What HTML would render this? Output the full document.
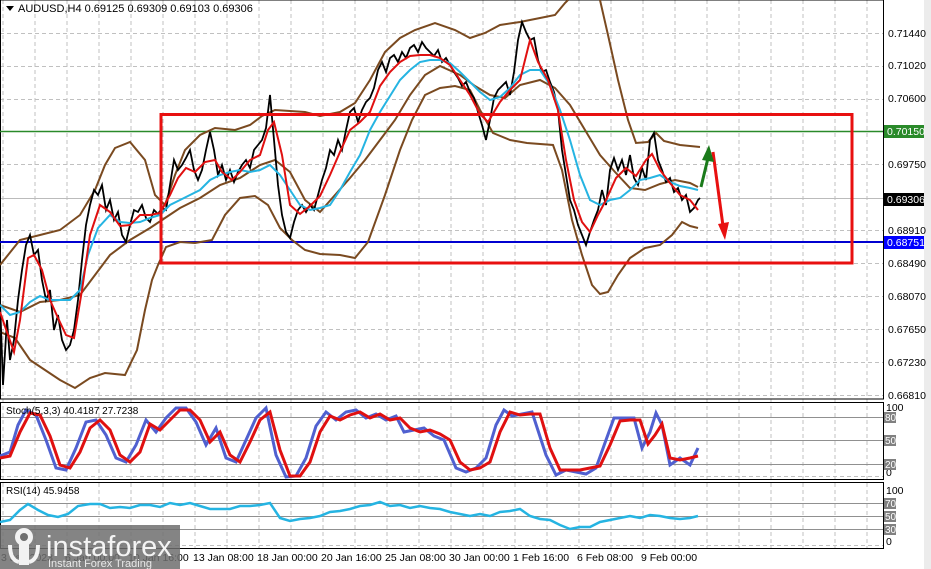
<!DOCTYPE html>
<html><head><meta charset="utf-8"><style>
html,body{margin:0;padding:0;background:#fff;}
body{width:931px;height:569px;overflow:hidden;position:relative;font-family:"Liberation Sans",sans-serif;}
svg text{font-family:"Liberation Sans",sans-serif;}
</style></head><body>
<svg width="931" height="569" viewBox="0 0 931 569" xmlns="http://www.w3.org/2000/svg" style="position:absolute;left:0;top:0">
<rect x="0" y="0" width="931" height="569" fill="#fff"/>
<rect x="924" y="0" width="7" height="569" fill="#ececec"/>
<g stroke="#c0c0c0" stroke-dasharray="4,3" stroke-width="1">
<path d="M3 0V548M35 0V548M67 0V548M99 0V548M131 0V548M163 0V548M195 0V548M227 0V548M259 0V548M291 0V548M323 0V548M355 0V548M387 0V548M419 0V548M451 0V548M483 0V548M515 0V548M547 0V548M579 0V548M611 0V548M643 0V548M675 0V548M707 0V548M739 0V548M771 0V548M803 0V548M835 0V548M867 0V548"/>
<path d="M0 33.5H883M0 66.5H883M0 99.5H883M0 164.5H883M0 230.5H883M0 263.5H883M0 296.5H883M0 329.5H883M0 362.5H883M0 395.5H883M0 476.5H883M0 545.5H883"/>
</g>
<path d="M0 198.5H883" stroke="#bbb"/>
<g fill="none" stroke="#000" stroke-width="1">
<rect x="0.5" y="0" width="883" height="399"/>
<rect x="0.5" y="402.5" width="883" height="77"/>
<rect x="0.5" y="482.5" width="883" height="66"/>
</g>
<g stroke="#909090" stroke-width="1">
<path d="M1 417.5H883M1 440.5H883M1 464.5H883M1 503.5H883M1 516.5H883M1 529.5H883"/>
</g>
<path d="M0 131.5H883" stroke="#2a8a2a" stroke-width="1.5"/>
<path d="M0 242H883" stroke="#0000d0" stroke-width="2"/>
<g fill="none" stroke="#7a4a20" stroke-width="2">
<polyline points="0,265 20,240 40,235 60,230 80,215 95,190 105,165 115,148 130,142 145,160 155,195 165,205 175,175 185,150 200,135 215,128 235,130 250,125 262,116 275,110 290,111 305,112 320,116 340,112 355,103 370,80 385,52 400,38 415,30 435,23 455,30 470,38 485,33 500,25 520,22 540,18 555,15 565,3 568,0"/>
<polyline points="600,0 608,35 618,80 628,120 636,143 648,142 656,133 664,141 680,145 700,147"/>
<polyline points="0,332 15,338 30,360 45,370 60,380 75,388 90,378 105,373 125,375 137,350 145,310 152,280 158,265 166,247 180,242 195,243 212,240 225,215 240,198 255,196 268,205 280,228 292,240 305,250 320,254 340,255 355,258 368,242 385,195 400,150 412,120 425,95 440,88 455,86 470,90 480,110 493,133 510,140 527,143 553,145 562,170 572,220 582,255 592,285 600,294 608,292 618,275 630,258 645,248 660,245 672,235 682,222 690,226 698,228"/>
<polyline points="0,305 20,312 40,302 60,300 80,295 95,275 110,255 130,240 150,228 165,218 180,208 200,198 220,185 240,178 260,165 275,160 290,172 305,200 320,212 335,195 350,178 365,160 380,140 395,120 410,95 425,75 440,66 460,75 475,86 490,95 505,98 520,85 540,80 555,88 570,105 585,130 600,155 615,172 630,188 645,190 660,184 675,180 690,183 698,187"/>
</g>
<polyline fill="none" stroke="#000" stroke-width="1.8" points="0,300 3,385 7,320 10,360 14,340 18,300 22,270 26,245 30,235 34,255 38,250 42,280 46,300 50,290 54,330 58,315 62,340 66,350 70,345 74,330 78,300 82,260 86,225 90,205 94,190 98,195 102,185 106,210 110,200 114,220 118,212 122,235 126,242 130,225 134,210 138,212 142,205 146,218 150,222 154,210 158,214 162,208 166,210 170,185 174,160 178,170 182,165 186,158 190,150 194,170 198,180 202,170 206,150 210,132 214,150 218,175 222,165 226,180 230,170 234,182 238,172 242,165 246,160 250,168 254,150 258,145 262,140 266,128 270,95 274,140 278,185 282,215 286,232 290,238 294,222 298,210 302,205 306,212 310,205 314,210 318,195 322,180 326,168 330,150 334,155 338,140 342,150 346,130 350,112 354,108 358,122 362,110 366,102 370,98 374,88 378,70 382,62 386,72 390,58 394,55 398,62 402,52 406,58 410,48 414,45 418,52 422,42 426,48 430,52 434,56 438,50 442,62 446,58 450,65 454,72 458,78 462,86 466,82 470,92 474,98 478,112 482,125 486,140 490,120 494,98 498,90 502,86 506,82 510,95 514,72 518,40 522,22 526,32 530,40 534,38 538,60 542,72 546,70 550,82 554,92 558,110 562,150 566,175 570,200 574,210 578,225 582,235 586,245 590,232 594,220 598,210 602,190 606,205 610,170 614,158 618,170 622,160 626,175 630,155 634,178 638,185 642,168 646,180 650,140 654,133 658,160 662,170 666,182 670,178 674,192 678,188 682,200 686,195 690,212 694,208 698,200 700,198"/>
<polyline fill="none" stroke="#25b4e2" stroke-width="2" points="0,305 10,315 20,312 30,302 40,296 50,300 60,300 70,300 80,290 88,255 98,228 110,215 120,222 130,223 140,222 150,218 160,215 170,205 180,200 190,195 200,190 210,180 220,175 230,172 240,170 250,172 260,170 270,165 280,175 290,190 300,205 310,210 320,208 330,205 340,190 350,172 360,155 370,130 380,112 390,96 400,80 410,70 420,62 430,60 440,60 450,63 460,72 470,82 480,92 490,100 500,97 510,88 520,75 530,70 540,70 550,85 560,110 570,140 580,175 590,200 600,205 610,200 620,198 630,190 640,180 650,178 660,175 670,182 680,186 690,188 698,190"/>
<polyline fill="none" stroke="#e01010" stroke-width="2" points="0,312 8,335 14,352 20,320 28,258 34,255 42,270 50,300 58,318 66,335 74,338 82,290 90,235 100,205 110,212 120,226 130,225 140,215 150,215 160,213 170,195 178,178 186,168 195,172 205,162 215,160 222,172 232,180 240,172 250,160 260,155 268,130 274,122 282,155 290,205 300,214 310,206 320,196 330,175 340,152 350,130 360,122 370,112 380,86 390,72 400,62 410,56 420,55 430,55 440,58 450,65 460,80 470,95 480,114 488,122 500,102 510,90 520,80 530,40 538,62 548,80 558,110 566,160 574,200 582,222 590,232 598,215 606,200 616,178 626,168 636,176 646,160 652,154 660,170 670,183 680,195 690,200 698,210"/>
<rect x="161" y="114.5" width="691" height="148.5" fill="none" stroke="#e81010" stroke-width="3"/>
<g stroke-width="3" fill="none">
<path d="M701 187 L708 158" stroke="#1a7a1a"/>
<path d="M713 152 L723 226" stroke="#e81010"/>
</g>
<path d="M709 145 L714 162 L702 160 Z" fill="#1a7a1a"/>
<path d="M725 240 L718 224 L729 222 Z" fill="#e81010"/>
<polyline fill="none" stroke="#5060d0" stroke-width="3" points="0,456 10,452 18,425 26,410 36,415 46,440 56,468 66,470 76,448 86,422 96,420 106,435 116,458 126,462 136,445 146,420 156,432 166,418 176,408 186,408 196,422 206,445 216,428 226,458 236,462 246,440 256,418 266,408 276,455 286,477 296,476 306,458 316,426 326,412 336,420 346,412 356,410 366,418 376,414 386,420 396,416 404,432 414,430 424,428 434,436 444,440 456,468 466,472 476,468 486,458 496,425 504,410 512,416 522,414 532,412 546,455 556,475 566,470 576,472 586,474 596,468 606,440 614,418 624,418 634,418 642,448 650,432 656,413 662,425 670,465 680,458 690,465 698,448"/>
<polyline fill="none" stroke="#e01010" stroke-width="3" points="0,458 10,456 20,432 30,413 40,415 50,436 60,465 70,468 80,452 90,428 100,420 110,430 120,455 130,462 140,452 150,424 160,430 170,420 180,410 190,410 200,420 210,442 220,432 230,455 240,462 250,442 260,420 270,412 280,450 290,476 300,476 310,462 320,432 330,416 340,420 350,415 360,412 370,418 380,414 390,420 400,418 410,428 420,432 430,430 440,434 450,440 460,462 470,470 480,468 490,462 500,432 510,412 520,415 530,414 540,414 550,448 560,470 570,470 580,470 590,468 600,466 610,445 620,421 630,420 640,420 648,444 655,435 662,424 670,458 680,460 690,458 698,456"/>
<polyline fill="none" stroke="#25b4e2" stroke-width="2.5" points="0,522 10,520 20,510 28,504 38,510 48,515 58,517 68,514 78,506 90,504 100,504 110,508 120,507 130,508 140,505 150,505 160,507 170,503 180,505 190,503 200,506 210,509 220,509 230,509 240,506 250,506 260,505 270,503 280,518 290,521 300,519 310,518 320,516 330,512 340,511 350,509 360,506 370,505 380,502 390,506 400,505 410,508 420,506 430,508 440,509 450,512 460,514 470,516 480,514 490,516 500,512 510,511 520,509 530,516 540,519 550,520 560,525 570,529 580,527 590,527 600,522 610,520 620,518 630,516 640,518 650,515 660,516 670,518 680,519 690,518 698,516"/>
<path d="M6 6 L14 6 L10 11 Z" fill="#000"/>
<text x="18" y="12" font-size="11" fill="#000">AUDUSD,H4  0.69125 0.69309 0.69103 0.69306</text>
<text x="6" y="414" font-size="10" fill="#000">Stoch(5,3,3) 40.4187 27.7238</text>
<text x="6" y="494" font-size="10" fill="#000">RSI(14) 45.9458</text>
<g font-size="10.5" fill="#000">
<text x="888" y="37">0.71440</text>
<text x="888" y="69">0.71020</text>
<text x="888" y="102">0.70600</text>
<text x="888" y="168">0.69750</text>
<text x="888" y="234">0.68910</text>
<text x="888" y="267">0.68490</text>
<text x="888" y="300">0.68070</text>
<text x="888" y="333">0.67650</text>
<text x="888" y="366">0.67230</text>
<text x="888" y="399">0.66810</text>
<text x="886" y="411">100</text>
<text x="886" y="476">0</text>
<text x="886" y="494">100</text>
<text x="886" y="545">0</text>
</g>
<rect x="884" y="125" width="40" height="13" fill="#2a8a2a"/>
<text x="887" y="135" font-size="10.5" fill="#fff">0.70150</text>
<rect x="884" y="193" width="40" height="13" fill="#000"/>
<text x="887" y="203" font-size="10.5" fill="#fff">0.69306</text>
<rect x="884" y="236" width="40" height="13" fill="#0000ff"/>
<text x="887" y="246" font-size="10.5" fill="#fff">0.68751</text>
<g fill="#808080"><rect x="884" y="412" width="12" height="11"/><rect x="884" y="435" width="12" height="11"/><rect x="884" y="459" width="12" height="11"/><rect x="884" y="498" width="12" height="11"/><rect x="884" y="511" width="12" height="11"/><rect x="884" y="524" width="12" height="11"/></g>
<g font-size="10" fill="#fff"><text x="885" y="421">80</text><text x="885" y="444">50</text><text x="885" y="468">20</text><text x="885" y="507">70</text><text x="885" y="520">50</text><text x="885" y="533">30</text></g>
<g font-size="10.5" fill="#000">
<text x="1" y="561">3 Jan 2023</text>
<text x="65" y="561">6 Jan 00:00</text>
<text x="128" y="561">10 Jan 16:00</text>
<text x="193" y="561">13 Jan 08:00</text>
<text x="257" y="561">18 Jan 00:00</text>
<text x="321" y="561">20 Jan 16:00</text>
<text x="385" y="561">25 Jan 08:00</text>
<text x="449" y="561">30 Jan 00:00</text>
<text x="513" y="561">1 Feb 16:00</text>
<text x="577" y="561">6 Feb 08:00</text>
<text x="641" y="561">9 Feb 00:00</text>
</g>
<rect x="0" y="525" width="180" height="44" fill="#6e6e6e" fill-opacity="0.85"/>
<g fill="#f2f2f2">
<circle cx="24" cy="537" r="9"/>
<rect x="19" y="543" width="10" height="22"/>
</g>
<circle cx="24" cy="537" r="4" fill="#6e6e6e"/>
<path d="M10 545 Q10 560 19 562 M38 545 Q38 560 29 562" stroke="#f2f2f2" stroke-width="4" fill="none"/>
<text x="46" y="556" font-size="29" fill="#f4f4f4">instaforex</text>
<text x="48" y="567" font-size="11" fill="#e8e8e8">Instant Forex Trading</text>
</svg>
</body></html>
